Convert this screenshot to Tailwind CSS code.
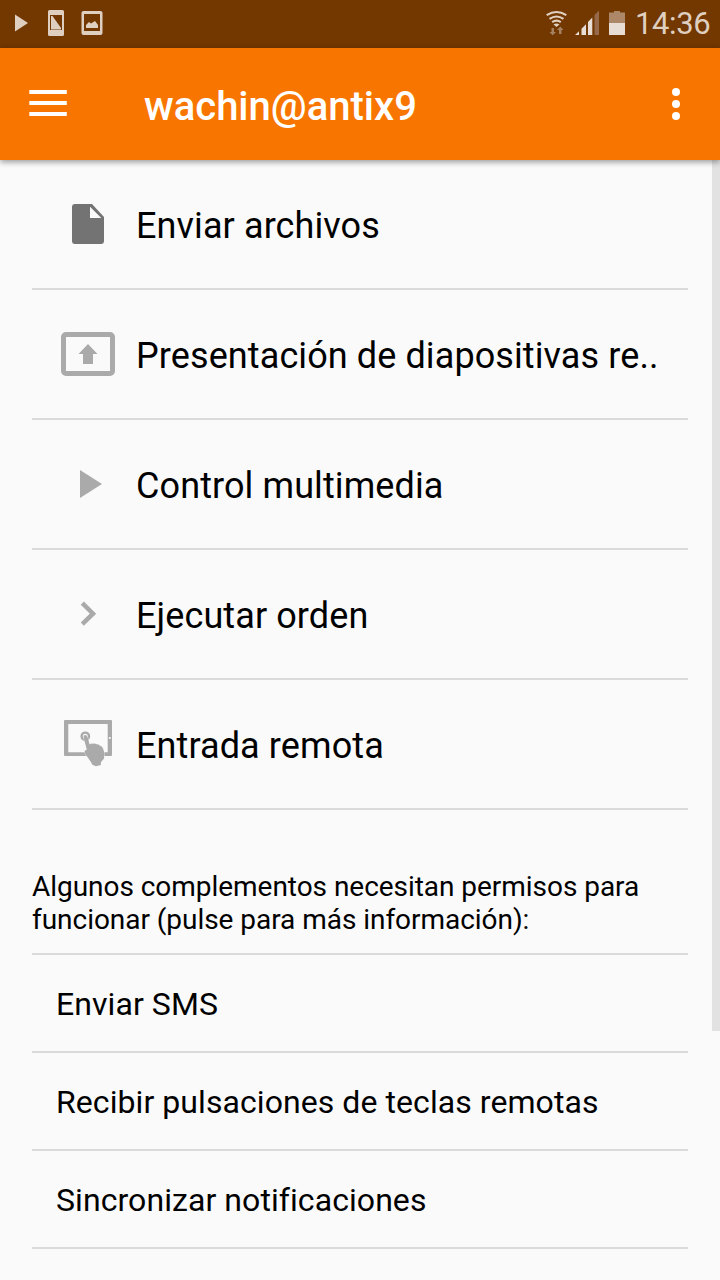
<!DOCTYPE html>
<html lang="es">
<head>
<meta charset="utf-8">
<meta name="viewport" content="width=device-width">
<title>wachin@antix9</title>
<script src="https://cdn.jsdelivr.net/npm/@tailwindcss/browser@4"></script>
</head>
<body class="h-[1280px] w-[720px] overflow-hidden bg-[#fafafa] font-['Roboto',sans-serif] text-black">
<div class="relative flex h-[1280px] flex-col overflow-hidden">
  <div class="flex h-12 shrink-0 items-center justify-between bg-[#733700]">
    <svg class="h-12 w-[120px]" viewBox="0 0 120 48" fill="#dfcfc1">
      <path d="M15 14.5 28 23 15 31.5z"/>
      <path fill-rule="evenodd" d="M49.500 10h13a1.500 1.500 0 0 1 1.500 1.500v23a1.500 1.500 0 0 1-1.500 1.500h-13a1.500 1.500 0 0 1-1.500-1.500v-23a1.500 1.500 0 0 1 1.500-1.500zM50 15v15h12V15z"/>
      <path d="M51 16h1.500L61 28v1.500H51z"/>
      <path fill-rule="evenodd" d="M83.500 11h17a2 2 0 0 1 2 2v20a2 2 0 0 1-2 2h-17a2 2 0 0 1-2-2V13a2 2 0 0 1 2-2zM84 14v17h16V14z"/>
      <path d="M86 28v-3l3-3 2 1.500 4-2.500 3 4v3z"/>
    </svg>
    <div class="flex h-12 items-center">
      <svg class="h-12 w-[100px]" viewBox="0 0 100 48">
        <g fill="none" stroke="#e0d0c2" stroke-width="2.200">
          <path d="M16.700 15.200q9.800-6.400 19.600 0M19.500 18.800q7-4.600 14 0M22.200 22.200q4.300-3 8.600 0"/>
        </g>
        <path d="M23.500 24.600q3-2 6 0L26.500 27z" fill="#e0d0c2"/>
        <path d="M21.500 28h2.500v4h2l-3.300 3.300L19.500 32h2zM29 34h2.500v-4h2L30.300 26.500 27 30h2z" fill="#a58061"/>
        <path d="M45 35 49 31.300V35zM51.500 35v-6.200L56 24.200V35zM58 35V22l4.300-4.400V35z" fill="#e8ddd4"/>
        <path d="M64.500 35V15l4.500-4.500V35z" fill="#95694a"/>
        <path d="M79 12.500h5V11h6v1.500h5V23H79z" fill="#ac8869"/>
        <path d="M79 23h16v12H79z" fill="#e8ddd4"/>
      </svg>
      <div class="w-[90px] pl-[5px] text-[31px] leading-[48px] tracking-[-0.4px] whitespace-nowrap text-[#dfcfc1]">14:36</div>
    </div>
  </div>

  <header class="relative z-10 flex h-28 shrink-0 items-center bg-[#f87600] shadow-[0_2px_6px_rgba(0,0,0,0.4)]">
    <svg class="h-28 w-[144px]" viewBox="0 0 144 112" fill="#fff"><path d="M29.300 42h37.500v4H29.300zM29.300 53h37.500v4H29.300zM29.300 64h37.500v4H29.300z"/></svg>
    <h1 class="flex-1 pt-1.5 text-[40px] leading-[48px] font-medium text-white">wachin@antix9</h1>
    <svg class="h-28 w-[88px]" viewBox="0 0 88 112" fill="#fff"><circle cx="44" cy="44" r="4"/><circle cx="44" cy="56" r="4"/><circle cx="44" cy="68" r="4"/></svg>
  </header>

  <main class="flex flex-col px-8">
    <ul class="text-[36px] leading-[42px] tracking-[0.1px] whitespace-nowrap">
      <li class="flex h-[130px] items-center gap-4 border-b-2 border-[#dadada] pl-6">
        <svg class="size-16" viewBox="0 0 64 64" fill="#737373"><path fill-rule="evenodd" d="M19 12h17l12 13v24a3 3 0 0 1-3 3H19a3 3 0 0 1-3-3V15a3 3 0 0 1 3-3zM34 14.700V26h11.300z"/></svg>
        <span class="pt-1">Enviar archivos</span>
      </li>
      <li class="flex h-[130px] items-center gap-4 border-b-2 border-[#dadada] pl-6">
        <svg class="size-16" viewBox="0 0 64 64"><rect x="7.500" y="12.500" width="49" height="39" rx="2.500" fill="none" stroke="#aaa" stroke-width="5"/><path fill="#aaa" d="M32 22l9.500 10H37v10H27V32h-4.500z"/></svg>
        <span class="pt-1">Presentación de diapositivas re..</span>
      </li>
      <li class="flex h-[130px] items-center gap-4 border-b-2 border-[#dadada] pl-6">
        <svg class="size-16" viewBox="0 0 64 64" fill="#aaa"><path d="M24 18l22 14-22 14z"/></svg>
        <span class="pt-1">Control multimedia</span>
      </li>
      <li class="flex h-[130px] items-center gap-4 border-b-2 border-[#dadada] pl-6">
        <svg class="size-16" viewBox="0 0 64 64" fill="none" stroke="#aaa" stroke-width="4.500"><path d="M26.300 21.200 37 31.700 26.300 42.200"/></svg>
        <span class="pt-1">Ejecutar orden</span>
      </li>
      <li class="flex h-[130px] items-center gap-4 border-b-2 border-[#dadada] pl-6">
        <svg class="size-16" viewBox="0 0 64 64" fill="#aaa">
          <path fill-rule="evenodd" d="M9 8h46a1 1 0 0 1 1 1v34a1 1 0 0 1-1 1H9a1 1 0 0 1-1-1V9a1 1 0 0 1 1-1zM12.300 12v28.300h39.400V12z"/>
          <circle cx="53.800" cy="26" r="1.100" fill="#fafafa"/>
          <circle cx="29.300" cy="24.300" r="3.700" fill="none" stroke="#aaa" stroke-width="2.400"/>
          <path stroke="#fafafa" stroke-width="0.600" paint-order="stroke" d="M27.500 25q0-2 1.900-1.900 1.800.2 2.200 2.200l2 7.200q1.500-1.500 3.500-.8 2-.6 3.500.6 2.500-.3 3.500 1.500 2.500.3 3 3l1 3v6.700l-3.200 3.800v2.700l-5 1.300-3.500-1.500-1.500-2.700-4.500-6.500q-2.800-3.800-1.300-5.200 1.300-.9 1.800-.3z"/>
        </svg>
        <span class="pt-1">Entrada remota</span>
      </li>
    </ul>

    <p class="h-[145px] border-b-2 border-[#dadada] pt-[60px] text-[28px] leading-[33px] tracking-[-0.04px] whitespace-nowrap">Algunos complementos necesitan permisos para<br>funcionar (pulse para más información):</p>
    <ul class="text-[32px] leading-[38px] tracking-[0.07px] whitespace-nowrap">
      <li class="flex h-[98px] items-center border-b-2 border-[#dadada] pt-0.5 pl-6">Enviar SMS</li>
      <li class="flex h-[98px] items-center border-b-2 border-[#dadada] pt-0.5 pl-6">Recibir pulsaciones de teclas remotas</li>
      <li class="flex h-[98px] items-center border-b-2 border-[#dadada] pt-0.5 pl-6">Sincronizar notificaciones</li>
    </ul>
  </main>
  <div class="absolute top-[160px] right-0 h-[871px] w-2 bg-[#e2e2e2]"></div>
</div>
</body>
</html>
